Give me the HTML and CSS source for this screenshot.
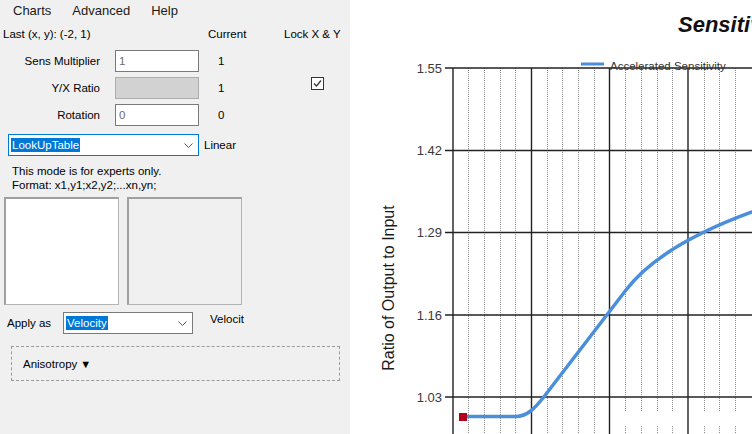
FILE: index.html
```html
<!DOCTYPE html>
<html lang="en">
<head>
  <meta charset="UTF-8" />
  <title>Sensitivity</title>
  <link rel="stylesheet" href="styles.css">
</head>
<body>
  <div class="window">
    <aside class="panel">
      <nav class="menubar">
        <span>Charts</span>
        <span>Advanced</span>
        <span>Help</span>
      </nav>

      <div class="settings">
        <div class="last">Last (x, y): (-2, 1)</div>
        <div class="head-current">Current</div>
        <div class="head-lock">Lock X &amp; Y</div>

        <label class="lbl">Sens Multiplier</label>
        <div class="textbox">1</div>
        <div class="cur">1</div>
        <div></div>

        <label class="lbl">Y/X Ratio</label>
        <div class="textbox disabled"></div>
        <div class="cur">1</div>
        <div class="lock">
          <span class="checkbox">
            <svg width="11" height="11" viewBox="0 0 11 11"><polyline points="2,5.5 4.5,8 9,2.5" fill="none" stroke="#333" stroke-width="1.2"/></svg>
          </span>
        </div>

        <label class="lbl">Rotation</label>
        <div class="textbox">0</div>
        <div class="cur">0</div>
        <div></div>
      </div>

      <div class="mode-row">
        <div class="combo focused">
          <span class="selected">LookUpTable</span>
          <svg class="chev" width="9" height="5" viewBox="0 0 9 5"><polyline points="0.5,0.5 4.5,4.5 8.5,0.5" fill="none" stroke="#555" stroke-width="1"/></svg>
        </div>
        <span class="mode-name">Linear</span>
      </div>

      <p class="hint">This mode is for experts only.<br>Format: x1,y1;x2,y2;...xn,yn;</p>

      <div class="tables">
        <div class="table-box"></div>
        <div class="table-box readonly"></div>
      </div>

      <div class="apply-row">
        <span class="apply-label">Apply as</span>
        <div class="combo apply">
          <span class="selected">Velocity</span>
          <svg class="chev" width="9" height="5" viewBox="0 0 9 5"><polyline points="0.5,0.5 4.5,4.5 8.5,0.5" fill="none" stroke="#555" stroke-width="1"/></svg>
        </div>
        <span class="apply-current">Velocit</span>
      </div>

      <div class="aniso">Anisotropy <span class="arrow">&#9660;</span></div>
    </aside>

    <main class="chart">
      <svg width="402" height="434" viewBox="350 0 402 434">
        <text class="title" x="678" y="32">Sensitivity</text>

        <!-- minor grid -->
        <g stroke="#8c8c8c" stroke-width="1" stroke-dasharray="1 1">
          <line x1="468.5" y1="68" x2="468.5" y2="434"/>
          <line x1="484.5" y1="68" x2="484.5" y2="434"/>
          <line x1="500.5" y1="68" x2="500.5" y2="434"/>
          <line x1="515.5" y1="68" x2="515.5" y2="434"/>
          <line x1="547.5" y1="68" x2="547.5" y2="434"/>
          <line x1="562.5" y1="68" x2="562.5" y2="434"/>
          <line x1="578.5" y1="68" x2="578.5" y2="434"/>
          <line x1="594.5" y1="68" x2="594.5" y2="434"/>
          <line x1="625.5" y1="68" x2="625.5" y2="434"/>
          <line x1="641.5" y1="68" x2="641.5" y2="434"/>
          <line x1="657.5" y1="68" x2="657.5" y2="434"/>
          <line x1="672.5" y1="68" x2="672.5" y2="434"/>
          <line x1="704.5" y1="68" x2="704.5" y2="434"/>
          <line x1="719.5" y1="68" x2="719.5" y2="434"/>
          <line x1="735.5" y1="68" x2="735.5" y2="434"/>
        </g>

        <rect x="606" y="411" width="132" height="14" fill="#fff"/>

        <!-- major grid -->
        <g stroke="#222" stroke-width="1.4">
          <line x1="453" y1="68" x2="453" y2="434"/>
          <line x1="531.5" y1="68" x2="531.5" y2="434"/>
          <line x1="609.5" y1="68" x2="609.5" y2="434"/>
          <line x1="688" y1="68" x2="688" y2="434"/>
          <line x1="445" y1="68" x2="752" y2="68"/>
          <line x1="445" y1="150.5" x2="752" y2="150.5"/>
          <line x1="445" y1="232.5" x2="752" y2="232.5"/>
          <line x1="445" y1="315" x2="752" y2="315"/>
          <line x1="445" y1="397" x2="752" y2="397"/>
        </g>

        <g class="ylabels">
          <text x="442" y="73">1.55</text>
          <text x="442" y="155">1.42</text>
          <text x="442" y="237">1.29</text>
          <text x="442" y="320">1.16</text>
          <text x="442" y="402">1.03</text>
        </g>

        <text class="ytitle" transform="translate(394,288) rotate(-90)">Ratio of Output to Input</text>

        <line x1="581" y1="64" x2="604" y2="64" stroke="#4b8fdc" stroke-width="3"/>
        <text class="legend" x="610" y="70">Accelerated Sensitivity</text>

        <path class="curve" d="M463,416.5 L516,416.5 C527,416.5 535,408 543,398 L626,290 C652,256 700,231 752,212"/>
        <rect x="459" y="413" width="8" height="8" fill="#b0001e"/>
      </svg>
    </main>
  </div>
</body>
</html>
```

FILE: styles.css
```css
* {
  box-sizing: border-box;
}

body {
  margin: 0;
  width: 752px;
  height: 434px;
  overflow: hidden;
  background: #fff;
  color: #000;
  font-family: "Liberation Sans", Arial, sans-serif;
  font-size: 11.5px;
}

.window {
  display: flex;
  height: 434px;
}

.panel {
  width: 350px;
  flex: none;
  background: #f0f0f0;
}

.menubar {
  display: flex;
  gap: 21px;
  height: 20px;
  align-items: center;
  padding-left: 13px;
  font-size: 13px;
  color: #1a1a1a;
}

.settings {
  display: grid;
  grid-template-columns: 115px 84px 85px 66px;
  grid-template-rows: 25px 22px 22px 22px;
  row-gap: 5px;
  align-items: center;
}

.last {
  grid-column: 1 / 3;
  padding: 3px 0 0 3px;
}

.head-current {
  padding: 3px 0 0 9px;
}

.head-lock {
  padding-top: 3px;
}

.lbl {
  text-align: right;
  padding-right: 15px;
}

.textbox {
  height: 22px;
  border: 1px solid #7a7a7a;
  background: #fff;
  color: #6d6d6d;
  padding-left: 3px;
  line-height: 20px;
}

.textbox.disabled {
  background: #d2d2d2;
  border-color: #adadad;
}

.cur {
  padding-left: 19px;
}

.lock {
  align-self: start;
  padding-left: 27px;
  display: flex;
}

.checkbox {
  width: 13px;
  height: 13px;
  border: 1px solid #333;
  background: #fff;
  display: flex;
}

.mode-row {
  display: flex;
  align-items: center;
  margin-top: 8px;
  padding-left: 8px;
}

.combo {
  display: flex;
  align-items: center;
  height: 22px;
  border: 1px solid #7a7a7a;
  background: #fff;
  padding-left: 2px;
}

.combo.focused {
  width: 191px;
  border-color: #0078d7;
}

.selected {
  background: #0078d7;
  color: #fff;
  line-height: 14px;
  padding: 0 1px;
}

.chev {
  margin-left: auto;
  margin-right: 5px;
}

.mode-name {
  margin-left: 5px;
}

.hint {
  margin: 8px 0 0 12px;
  line-height: 14px;
}

.tables {
  display: flex;
  gap: 8px;
  margin-top: 5px;
  padding-left: 4px;
}

.table-box {
  width: 115px;
  height: 108px;
  border: 1px solid #b4b4b4;
  border-top: 2px solid #a0a0a0;
  border-left: 2px solid #a0a0a0;
  background: #fff;
}

.table-box.readonly {
  background: #f0f0f0;
}

.apply-row {
  display: flex;
  margin-top: 7px;
  padding-left: 7px;
}

.apply-label {
  width: 56px;
  align-self: center;
}

.combo.apply {
  width: 130px;
}

.apply-current {
  margin-left: 17px;
  line-height: 14px;
}

.aniso {
  display: flex;
  align-items: center;
  margin: 12px 10px 0 11px;
  height: 35px;
  border: 1px dashed #9a9a9a;
  padding-left: 11px;
}

.arrow {
  font-size: 11px;
  margin-left: 3px;
}

.chart {
  flex: 1;
  overflow: hidden;
}

.chart svg {
  display: block;
}

.title {
  font-family: "Liberation Sans", Arial, sans-serif;
  font-size: 22px;
  font-weight: bold;
  font-style: italic;
  fill: #111;
}

.ylabels text {
  font-family: "Liberation Sans", Arial, sans-serif;
  font-size: 13px;
  fill: #3a3a3a;
  text-anchor: end;
}

.ytitle {
  font-family: "Liberation Sans", Arial, sans-serif;
  font-size: 16px;
  fill: #1a1a1a;
  text-anchor: middle;
}

.legend {
  font-family: "Liberation Sans", Arial, sans-serif;
  font-size: 11.5px;
  fill: #333;
}

.curve {
  fill: none;
  stroke: #4b8fdc;
  stroke-width: 3.5;
  stroke-linejoin: round;
  stroke-linecap: round;
}
```
